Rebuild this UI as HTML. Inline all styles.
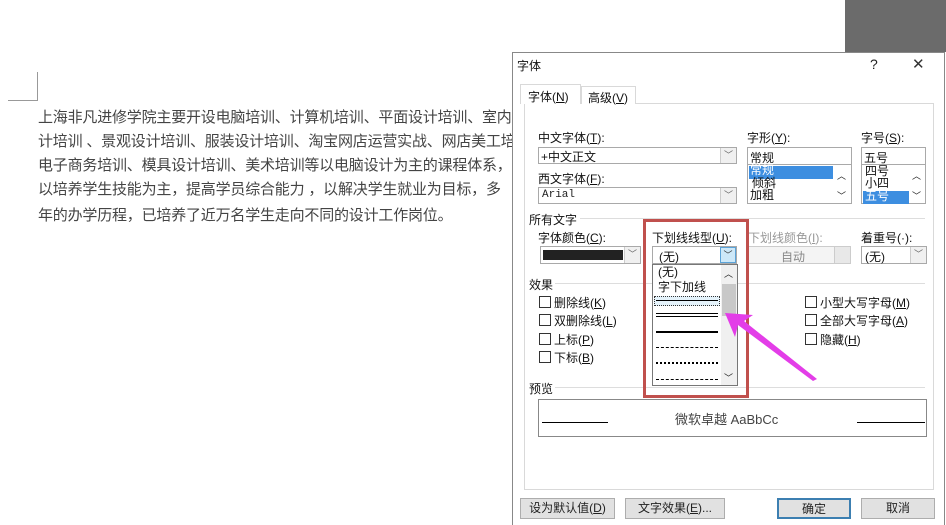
<!DOCTYPE html>
<html><head><meta charset="utf-8"><style>
*{margin:0;padding:0;box-sizing:border-box}
body{width:946px;height:525px;overflow:hidden;background:#fff;position:relative;font-family:"Liberation Sans","Noto Sans CJK SC",sans-serif;color:#222}
.a{position:absolute;white-space:nowrap}
.doc{left:38px;font-size:15px;color:#444;letter-spacing:-0.2px}
.f{font-size:12px;color:#111}
.box{position:absolute;border:1px solid #a9a9a9;background:#fff}
.arr{position:absolute;width:16px;border-left:1px solid #ccc;background:#f0f0f0;top:0;bottom:0;right:0;font-size:9px;color:#666;text-align:center}
.cb{position:absolute;width:12px;height:12px;border:1px solid #333;background:#fff}
.btn{position:absolute;height:21px;border:1px solid #adadad;background:#e1e1e1;font-size:12px;text-align:center;line-height:19px}
</style></head><body>
<div class="a" style="left:845px;top:0;width:101px;height:52px;background:#6b6b6b"></div>
<div class="a" style="left:37px;top:72px;width:1px;height:28px;background:#999"></div>
<div class="a" style="left:8px;top:100px;width:30px;height:1px;background:#999"></div>
<div class="a doc" style="top:106px">上海非凡进修学院主要开设电脑培训、计算机培训、平面设计培训、室内设</div>
<div class="a doc" style="top:130px">计培训 、景观设计培训、服装设计培训、淘宝网店运营实战、网店美工培</div>
<div class="a doc" style="top:154px">电子商务培训、模具设计培训、美术培训等以电脑设计为主的课程体系，</div>
<div class="a doc" style="top:178px">以培养学生技能为主，提高学员综合能力 ，以解决学生就业为目标，多</div>
<div class="a doc" style="top:204px">年的办学历程，已培养了近万名学生走向不同的设计工作岗位。</div>

<div class="a" style="left:512px;top:52px;width:433px;height:473px;background:#fff;border:1px solid #888;border-bottom:none"></div>
<div class="a f" style="left:517px;top:57px">字体</div>
<div class="a" style="left:870px;top:56px;font-size:14px">?</div>
<div class="a" style="left:912px;top:55px;font-size:15px;color:#333">✕</div>
<div class="a" style="left:524px;top:103px;width:410px;height:387px;border:1px solid #d9d9d9"></div>
<div class="a" style="left:520px;top:84px;width:61px;height:20px;border:1px solid #d9d9d9;border-bottom:none;background:#fff"></div>
<div class="a f" style="left:528px;top:88px">字体(<u>N</u>)</div>
<div class="a" style="left:581px;top:86px;width:55px;height:18px;border:1px solid #d9d9d9;border-bottom:none;background:#fff"></div>
<div class="a f" style="left:588px;top:89px">高级(<u>V</u>)</div>

<div class="a f" style="left:538px;top:129px">中文字体(<u>T</u>):</div>
<div class="box" style="left:538px;top:147px;width:199px;height:17px"><span class="a f" style="left:2px;top:0">+中文正文</span><div class="arr">﹀</div></div>
<div class="a f" style="left:538px;top:170px">西文字体(<u>F</u>):</div>
<div class="box" style="left:538px;top:187px;width:199px;height:17px"><span class="a" style="left:3px;top:1px;font-family:'Liberation Mono';font-size:11px">Arial</span><div class="arr">﹀</div></div>

<div class="a f" style="left:747px;top:129px">字形(<u>Y</u>):</div>
<div class="box" style="left:747px;top:147px;width:105px;height:18px"><span class="a f" style="left:2px;top:1px">常规</span></div>
<div class="box" style="left:747px;top:164px;width:105px;height:40px">
<div class="a" style="left:1px;top:1px;width:84px;height:13px;background:#3d8ee0"></div>
<span class="a f" style="left:2px;top:-1px;color:#fff;line-height:13px">常规</span>
<span class="a f" style="left:4px;top:12px;line-height:12px">倾斜</span>
<span class="a f" style="left:2px;top:24px;line-height:13px">加粗</span>
<span class="a" style="left:89px;top:4px;font-size:9px">︿</span><span class="a" style="left:89px;top:24px;font-size:9px">﹀</span></div>

<div class="a f" style="left:861px;top:129px">字号(<u>S</u>):</div>
<div class="box" style="left:861px;top:147px;width:65px;height:18px"><span class="a f" style="left:2px;top:1px">五号</span></div>
<div class="box" style="left:861px;top:164px;width:65px;height:40px">
<div class="a" style="left:1px;top:26px;width:46px;height:13px;background:#3d8ee0"></div>
<span class="a f" style="left:3px;top:0;line-height:13px">四号</span>
<span class="a f" style="left:3px;top:12px;line-height:13px">小四</span>
<span class="a f" style="left:3px;top:25px;line-height:13px;color:#fff">五号</span>
<span class="a" style="left:50px;top:4px;font-size:9px">︿</span><span class="a" style="left:50px;top:24px;font-size:9px">﹀</span></div>

<div class="a f" style="left:529px;top:211px">所有文字</div>
<div class="a" style="left:580px;top:218px;width:345px;height:1px;background:#ddd"></div>
<div class="a f" style="left:538px;top:229px">字体颜色(<u>C</u>):</div>
<div class="box" style="left:540px;top:246px;width:101px;height:18px"><div class="a" style="left:2px;top:3px;width:80px;height:10px;background:#222"></div><div class="arr">﹀</div></div>
<div class="a f" style="left:652px;top:229px">下划线线型(<u>U</u>):</div>
<div class="box" style="left:652px;top:246px;width:85px;height:18px"><span class="a f" style="left:6px;top:1px">(无)</span><div class="arr" style="background:#cde8f8;border:1px solid #5ba3d8;color:#333">﹀</div></div>
<div class="a f" style="left:748px;top:229px;color:#999">下划线颜色(<u>I</u>):</div>
<div class="box" style="left:748px;top:246px;width:103px;height:18px;border-color:#ccc;background:#f4f4f4"><span class="a f" style="left:32px;top:1px;color:#888">自动</span><div class="arr" style="background:#e8e8e8"></div></div>
<div class="a f" style="left:861px;top:229px">着重号(·):</div>
<div class="box" style="left:861px;top:246px;width:66px;height:18px"><span class="a f" style="left:3px;top:1px">(无)</span><div class="arr">﹀</div></div>

<div class="a f" style="left:529px;top:276px">效果</div>
<div class="a" style="left:555px;top:283px;width:370px;height:1px;background:#ddd"></div>
<div class="cb" style="left:539px;top:296px"></div><div class="a f" style="left:554px;top:294px">删除线(<u>K</u>)</div>
<div class="cb" style="left:539px;top:314px"></div><div class="a f" style="left:554px;top:312px">双删除线(<u>L</u>)</div>
<div class="cb" style="left:539px;top:333px"></div><div class="a f" style="left:554px;top:331px">上标(<u>P</u>)</div>
<div class="cb" style="left:539px;top:351px"></div><div class="a f" style="left:554px;top:349px">下标(<u>B</u>)</div>
<div class="cb" style="left:805px;top:296px"></div><div class="a f" style="left:820px;top:294px">小型大写字母(<u>M</u>)</div>
<div class="cb" style="left:805px;top:314px"></div><div class="a f" style="left:820px;top:312px">全部大写字母(<u>A</u>)</div>
<div class="cb" style="left:805px;top:333px"></div><div class="a f" style="left:820px;top:331px">隐藏(<u>H</u>)</div>

<div class="a f" style="left:529px;top:380px">预览</div>
<div class="a" style="left:555px;top:387px;width:370px;height:1px;background:#ddd"></div>
<div class="box" style="left:538px;top:399px;width:389px;height:38px;border-color:#888">
<div class="a" style="left:3px;top:22px;width:66px;height:1px;background:#000"></div>
<div class="a" style="left:318px;top:22px;width:68px;height:1px;background:#000"></div>
<span class="a" style="left:136px;top:9px;font-size:13px;color:#444">微软卓越 AaBbCc</span></div>

<div class="box" style="left:652px;top:264px;width:86px;height:122px;border-color:#777">
<span class="a f" style="left:5px;top:-2px">(无)</span>
<span class="a f" style="left:5px;top:13px">字下加线</span>
<div class="a" style="left:1px;top:31px;width:66px;height:10px;border:1px dotted #333;background:#e5f3fb"></div>
<div class="a" style="left:3px;top:35px;width:62px;height:1px;background:#000"></div>
<div class="a" style="left:3px;top:48px;width:62px;height:1px;background:#000"></div>
<div class="a" style="left:3px;top:51px;width:62px;height:1px;background:#000"></div>
<div class="a" style="left:3px;top:66px;width:62px;height:2px;background:#000"></div>
<div class="a" style="left:3px;top:82px;width:62px;border-top:1px dashed #000"></div>
<div class="a" style="left:3px;top:97px;width:62px;border-top:2px dotted #000"></div>
<div class="a" style="left:3px;top:114px;width:62px;border-top:1px dashed #000"></div>
<div class="a" style="left:68px;top:0;width:16px;height:120px;background:#f0f0f0"></div>
<div class="a" style="left:69px;top:19px;width:14px;height:32px;background:#c8c8c8"></div>
<span class="a" style="left:71px;top:2px;font-size:9px">︿</span><span class="a" style="left:71px;top:106px;font-size:9px">﹀</span>
</div>
<div class="a" style="left:643px;top:219px;width:106px;height:179px;border:3px solid #c0504d"></div>

<svg class="a" style="left:715px;top:305px" width="110" height="80"><polygon points="10,8 38,10 29,16 102,74 98,76 23,20 20,32" fill="#e33de8"/></svg>

<div class="btn" style="left:520px;top:498px;width:95px">设为默认值(<u>D</u>)</div>
<div class="btn" style="left:625px;top:498px;width:100px">文字效果(<u>E</u>)...</div>
<div class="btn" style="left:777px;top:498px;width:74px;border:2px solid #3c7fb1">确定</div>
<div class="btn" style="left:861px;top:498px;width:74px">取消</div>
</body></html>
